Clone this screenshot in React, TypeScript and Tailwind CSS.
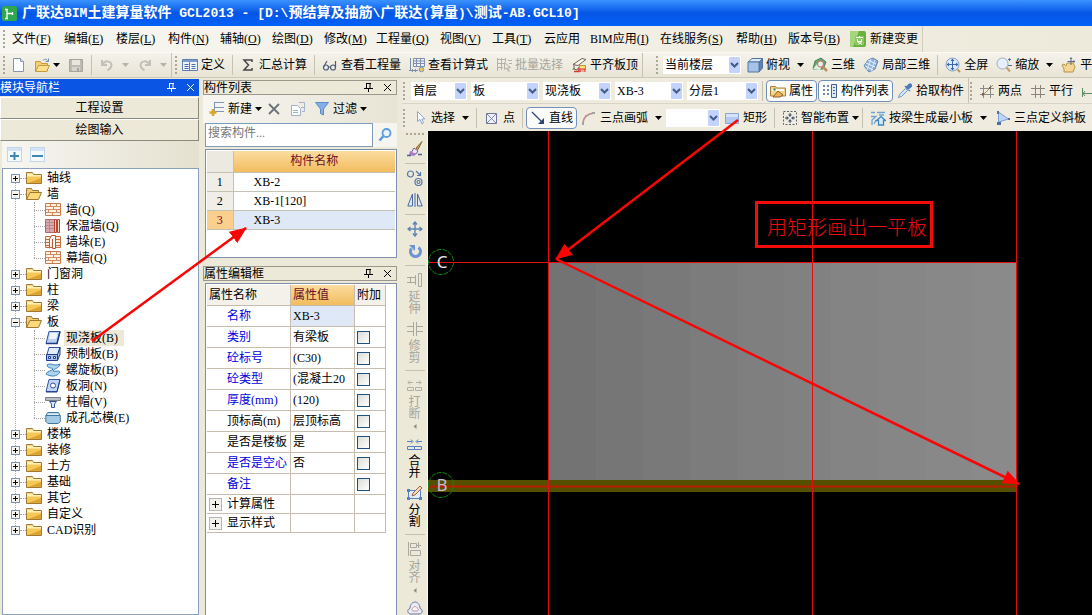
import { Fragment, useState, type ReactNode } from 'react';

const FONT = "font-['Liberation_Serif','Noto_Sans_CJK_SC',serif]";

/* ---------- Icons ---------- */

const ICONS: Record<string, ReactNode> = {
  newFile: (
    <>
      <path d="M3.5 1.5h7l3 3v10h-10z" fill="#fdfeff" stroke="#8794ab" />
      <path d="M10.5 1.5v3h3" fill="#dce5f2" stroke="#8794ab" />
    </>
  ),
  open: (
    <>
      <path d="M1.5 14V4.5h5l1 2h6V14z" fill="#f3cf78" stroke="#c69a3c" />
      <path d="M1.5 14.5l3-6h11l-3 6z" fill="#fbe08e" stroke="#c69a3c" />
      <path d="M9 3.5c2-2 4-1.5 5 .5M14.500 1.500v3h-3" fill="none" stroke="#6f8fb5" />
    </>
  ),
  save: (
    <>
      <path d="M1.500 2.500h13v12h-13z" fill="#bdbbb3" stroke="#a5a39b" />
      <path d="M4 3h8v5H4z" fill="#e8e6dd" />
      <path d="M4 10h8v4H4z" fill="#d6d4cb" />
      <path d="M9 11h2v3H9z" fill="#a5a39b" />
    </>
  ),
  undo: <path d="M3 3v5h5M3.500 7.500C6 3 12 3.500 12.500 8c0 3-2 4-4 5.500" fill="none" stroke="#c2c0b8" strokeWidth="2" />,
  redo: <path d="M13 3v5H8M12.500 7.500C10 3 4 3.500 3.500 8c0 3 2 4 4 5.500" fill="none" stroke="#c2c0b8" strokeWidth="2" />,
  define: (
    <>
      <path d="M.5 2.500h15v11H.5z" fill="#eef4fc" stroke="#5f7fae" />
      <path d="M1 3h14v2H1z" fill="#7d9ccb" />
      <path d="M2.500 7.500h4M2.500 9.500h4M2.500 11.500h4M9.500 7.500h4M9.500 9.500h4M9.500 11.500h4" stroke="#4a6ca5" />
      <path d="M7.500 5v8" stroke="#5f7fae" />
    </>
  ),
  sigma: <path d="M12 5V3H4l4.500 5L4 13h8v-2" fill="none" stroke="#444" strokeWidth="1.500" />,
  glasses: (
    <g fill="none" stroke="#4d5c78" strokeWidth="1.200">
      <circle cx="4" cy="10.500" r="2.500" />
      <circle cx="11" cy="10.500" r="2.500" />
      <path d="M6.500 10h2M1.500 10L5 4M13.500 10V4" />
    </g>
  ),
  formula: (
    <>
      <path d="M1.500 1v13M4.500 1.500h11v8h-11z" fill="#eef2f8" stroke="#7e8eaa" />
      <path d="M4 4h11M4 6.500h11M7.500 2v7M11.500 2v7" stroke="#7e8eaa" />
      <path d="M0 13.500h9M3.500 12v3M6.500 12v3" stroke="#7e8eaa" />
      <circle cx="12.500" cy="12.500" r="2.300" fill="#e6c46a" stroke="#8795b3" />
    </>
  ),
  batch: (
    <g fill="none" stroke="#b3b1a8">
      <path d="M1.500 1v13M1 2.500h9M1 6.500h7M1 10.500h6M5.500 1v12M9.500 1v4M12 3.500h4M13 6.500h3" />
      <path d="M8.500 5.500l6 5-3 .5 2 3.500M8.500 5.500v7l2-1.500 2 3.500" fill="#e9e6da" />
    </g>
  ),
  slabTop: (
    <>
      <path d="M2 7.500l9-6 4 1-8 6z" fill="#fff8ea" stroke="#6d6658" />
      <path d="M3 8v4l3 1 2-3M1.500 13l2-2" fill="none" stroke="#6d6658" />
      <path d="M3 14.500h5V11" fill="none" stroke="#d1382c" strokeWidth="1.500" />
      <path d="M8.500 8.500h6v4h-6z" fill="#ffe07a" stroke="#c98b35" />
      <path d="M9 15v-3h5v3" fill="#f4a79b" stroke="#d1382c" />
    </>
  ),
  cube: (
    <>
      <path d="M1 5l4-3.500h10.500L12 5z" fill="#dce8f9" stroke="#54749f" />
      <path d="M12 5l3.500-3.500V11L12 15z" fill="#5f82b5" stroke="#54749f" />
      <path d="M1 5h11v10H1z" fill="#a6c2e8" stroke="#54749f" />
    </>
  ),
  view3d: (
    <>
      <path d="M1 12L3 4l6-3 5 4-3 7z" fill="#67a870" stroke="#4d7d58" />
      <path d="M1 12l4-5 5 2-2 4z" fill="#dceee0" />
      <path d="M10 9l5 5" stroke="#b78f60" strokeWidth="2.500" />
      <circle cx="8.500" cy="7" r="3" fill="#e3f1fb" stroke="#d26b4b" />
    </>
  ),
  part3d: (
    <>
      <path d="M1 9l4-6 5-2 5 3-3 8-6 3z" fill="#8fb0da" stroke="#6688b5" />
      <path d="M3 6l9 4M5 3l8 4M2 9l8 4" stroke="#eef5fd" />
      <path d="M8 2L4 13M12 3L8 14" stroke="#dbe8f7" />
    </>
  ),
  fullView: (
    <>
      <circle cx="7.500" cy="7.500" r="6.500" fill="#dce9fb" stroke="#8ba0bf" />
      <path d="M7.500 3v9M3 7.500h9" stroke="#3c67a8" />
      <path d="M7.500 1.500l2 2.500h-4zM7.500 13.500l2-2.500h-4zM1.500 7.500L4 5.500v4zM13.500 7.500L11 5.500v4z" fill="#3c67a8" />
      <path d="M12.500 12.500l2.500 2.500" stroke="#b7935c" strokeWidth="2" />
    </>
  ),
  zoom: (
    <>
      <circle cx="6.500" cy="6.500" r="5.500" fill="#e6effb" stroke="#9cacc6" />
      <path d="M10.500 10.500l3.500 4" stroke="#c89e66" strokeWidth="2" />
      <path d="M13.500 1v3M12 2.500h3M12 8.500h4" stroke="#54749f" />
    </>
  ),
  pan: (
    <>
      <path d="M3 15v-3L1 8l2-1 2 2 1-3h6l2 4-2 5z" fill="#f2d894" stroke="#b7934d" />
      <path d="M10 1v7M6.500 4.500h7M9 2l1-1.500L11 2M12.500 3.500l1.500 1-1.500 1" fill="none" stroke="#5b6c8a" />
    </>
  ),
  property: (
    <>
      <path d="M.5 13V3.500h5l1 1.500h9V13z" fill="#f2d48a" stroke="#a98242" />
      <path d="M2 6h12v2H2z" fill="#fff" />
      <path d="M3 14l5-6 5 4-3 2z" fill="#e9b55b" stroke="#8e6328" />
      <circle cx="4.500" cy="6.500" r="1.300" fill="#4b9b52" />
    </>
  ),
  compList: (
    <>
      <path d="M1 3h2M1 7h2M1 11h2M5 3h2M5 7h2M5 11h2" stroke="#44628f" strokeWidth="1.500" />
      <path d="M9.500 1.500h5v13h-5z" fill="#dfeaf8" stroke="#44628f" />
      <path d="M11 4.500h2M11 7.500h2M11 10.500h2" stroke="#44628f" />
    </>
  ),
  pick: (
    <>
      <path d="M1.500 14.500l1-3 6-6 2 2-6 6z" fill="#d6e6fa" stroke="#6f97cc" />
      <path d="M8 3l5 5M9.500 4.500l2.500-3c1.500-1 3 .5 2 2l-3 2.500z" fill="#4c80c6" stroke="#4478bd" strokeWidth="1.500" />
    </>
  ),
  twoPoint: (
    <g fill="none" stroke="#8a8b86">
      <path d="M4.500 2v13M11.500 2v13M1 5.500h14M1 11.500h14" />
      <path d="M3 13L14 2" stroke="#b08a50" />
      <path d="M3 10h2v2H3zM10 4h2v2h-2z" fill="#666" stroke="none" />
    </g>
  ),
  parallel: <path d="M5.500 2v13M10.500 2v13M1 5.500h14M1 11.500h14" fill="none" stroke="#85867f" />,
  angle: <path d="M1.500 5v9M1 10.500h11M4 8l-2 2.500L4 13" fill="none" stroke="#5c8a62" />,
  cursor: <path d="M5.500 1.500v10l2.500-2 2 4.500 1.500-1L9.800 9h3z" fill="#fbfdff" stroke="#8fa5c7" />,
  point: (
    <>
      <path d="M2.500 3.500h10v10h-10z" fill="#eef0f8" stroke="#6f7796" />
      <path d="M3 4l9 9M12 4l-9 9" stroke="#8189a8" />
    </>
  ),
  line: (
    <>
      <path d="M2 2l10 10" stroke="#2c4676" strokeWidth="1.300" />
      <path d="M14 14H8l6-6z" fill="#2c4676" />
    </>
  ),
  arc: (
    <>
      <path d="M2 14C2 8 6 4 13 3" fill="none" stroke="#c08f8f" strokeWidth="1.500" />
      <path d="M1 12h2v3H1zM4 5h2v2H4zM11 2h3v2h-3z" fill="#a5a0a0" />
    </>
  ),
  rect: (
    <>
      <path d="M1.500 3.500h13v10h-13z" fill="#b3cbf2" stroke="#8aa5d6" />
      <path d="M2 4h12v3H2z" fill="#d5e3fa" />
    </>
  ),
  smart: (
    <>
      <path d="M1.500 1.500h13v13h-13z" fill="none" stroke="#5d636f" strokeDasharray="2 1.500" />
      <path d="M8 3v3M8 10v3M3 8h3M10 8h3" stroke="#45546f" />
      <path d="M8 7l2-2.500H6zM8 9l2 2.500H6zM7 8L4.500 6v4zM9 8l2.500-2v4z" fill="#45546f" />
    </>
  ),
  minSlab: (
    <g fill="none" stroke="#6da4d4" strokeWidth="1.300">
      <path d="M1 2.500h4M1 6.500h5L2 10v5M4 14l2-4M7 2.500h8M9 5h5" />
      <path d="M6.500 10.500l4.500-4 4.500 4h-2v4.500h-5v-4.500z" fill="#d7e9f8" stroke="#3f86c4" />
    </g>
  ),
  slope: (
    <>
      <path d="M3.500 2v10l10-3z" fill="#bcd5f5" stroke="#7ba1d6" />
      <path d="M2 1h2v3H2zM2 12h4v3H2zM13 8h2v2h-2z" fill="#4f6f9f" />
    </>
  ),
  folder: (
    <>
      <path d="M.5 13.500v-11h6l1 2h8v9z" fill="#f5c85a" stroke="#9c7a35" />
      <path d="M1 6.500h14V5H7.500l-1-1.500H1z" fill="#fff0b5" />
      <path d="M2 13h13V8z" fill="#e0a430" />
    </>
  ),
  folderOpen: (
    <>
      <path d="M.5 13.500v-11h5l1 2h6v3" fill="#f1cd75" stroke="#9c7a35" />
      <path d="M.5 13.500l3.500-7h11.500l-3 7z" fill="#fbd979" stroke="#9c7a35" />
    </>
  ),
  wall: (
    <>
      <path d="M.5 1.500h15v12H.5z" fill="#fff3e6" stroke="#c77b4d" />
      <path d="M1 4.500h14M1 7.500h14M1 10.500h14M5.500 2v2.500M11.500 2v2.500M8.500 5v2.500M3.500 8v2.500M11.500 8v2.500M7.500 11v2" stroke="#d08a5e" />
    </>
  ),
  wallInsulated: (
    <>
      <path d="M.5 1.500h9v13h-9z" fill="#dba9ac" stroke="#a86b72" />
      <path d="M1 4.500h8M1 7.500h8M1 10.500h8M4.500 2v12" stroke="#b8888f" />
      <path d="M9.500 1.500h2v13h-2zM12.500 1.500h2v13h-2z" fill="#f7d9c8" stroke="#b2452f" />
    </>
  ),
  wallPier: (
    <>
      <path d="M.5 2.500h15v11H.5z" fill="#fbe8d7" stroke="#c17044" />
      <path d="M1 5.500h4M1 8.500h4M11 5.500h4M11 8.500h4M11 11.500h4M1 11.500h4" stroke="#c17044" />
      <path d="M4.500 14.500V5l2-3.500h4v13h-3V5" fill="#fff" stroke="#b85b33" />
    </>
  ),
  slab: (
    <>
      <path d="M4 1.500h11l-3 12H1z" fill="#b9cff3" stroke="#31539c" />
      <path d="M5 3h8l-2 6H4z" fill="#eef4fd" />
      <path d="M1 13.500h11l3-12" fill="none" stroke="#1d3b85" strokeWidth="1.500" />
    </>
  ),
  slabPrecast: (
    <>
      <path d="M4 1.500h11l-2 7H2z" fill="#e3ecfb" stroke="#31539c" />
      <path d="M1.500 8.500h11v6h-11zM12.500 8.500l2.500-7v7l-2.500 6" fill="#a9c2ee" stroke="#1d3b85" />
      <path d="M3.500 10.500h2v2h-2zM8.500 10.500h2v2h-2z" fill="#fff" stroke="#1d3b85" />
    </>
  ),
  slabSpiral: (
    <path d="M2 3c4-3 7 2 13-1-1 5-6 4-7 7 3 1 5-1 7 1-3 5-9 5-14 2 1-3 6-3 7-5-2-2-5 0-6-4z" fill="#a9d5f1" stroke="#3a7db5" />
  ),
  slabHole: (
    <>
      <path d="M4 1.500h11l-3 12H1z" fill="#c3d5f5" stroke="#31539c" />
      <circle cx="8" cy="7.500" r="2.500" fill="#fff" stroke="#31539c" />
      <path d="M1 14h11l3-12" fill="none" stroke="#1d3b85" />
    </>
  ),
  columnCap: (
    <>
      <path d="M.5 3.500h15v3H.5z" fill="#b9bcc2" stroke="#777c85" />
      <path d="M4.500 7.500h7l-2 2.500v3.500h-3V10z" fill="#dbe7fa" stroke="#2f55a0" />
    </>
  ),
  coreMould: (
    <>
      <path d="M.8 5.500l2-3h10.500l2 3v6l-2 2H2.800l-2-2z" fill="#a4cbe6" stroke="#44779f" />
      <path d="M1 5.500h14" stroke="#44779f" />
      <path d="M3 3.500h10l1 1.500H2z" fill="#d7ebf8" />
    </>
  ),
  addItem: (
    <>
      <path d="M5.500 1v9M5.500 1.500H15M5.500 6.500H15M5.500 10.500H15" fill="none" stroke="#7e95b8" />
      <path d="M4 8v7M.5 11.500h7" stroke="#d7a62d" strokeWidth="2.500" />
    </>
  ),
  remove: <path d="M3 3l10 10M13 3L3 13" stroke="#6b7279" strokeWidth="1.800" />,
  copyDoc: (
    <>
      <path d="M1.500 4.500h6l3 3v7h-9z" fill="#fbfcfe" stroke="#a4b2ca" />
      <path d="M3 9.500h5M3 11.500h5" stroke="#a4b2ca" />
      <path d="M9 1.500h5.500v9H12M14 6.500h-3" fill="none" stroke="#a4b2ca" />
    </>
  ),
  filter: <path d="M1.500 1.500h13L9.500 8v6l-3-1.500V8z" fill="#86aee6" stroke="#5f8bc9" />,
  search: (
    <>
      <circle cx="9.500" cy="6" r="4" fill="#eaf4fe" stroke="#5d9dda" strokeWidth="1.800" />
      <path d="M6.500 9L2.500 13.500" stroke="#5d9dda" strokeWidth="2.500" />
    </>
  ),
  brush: (
    <>
      <path d="M15 .5L9 7l2 1.500z" fill="#c99b5b" stroke="#8f6937" />
      <path d="M7 7l4 3-2 3-5-1z" fill="#efe4f4" stroke="#71618d" />
      <path d="M3 10l6 3-2 2-5-1z" fill="#a97cc4" />
      <path d="M0 14.500h4M11 13.500h4" stroke="#45648f" strokeWidth="1.500" />
    </>
  ),
  copy: (
    <g fill="none" stroke="#5a76ab" strokeWidth="1.200">
      <circle cx="3.500" cy="4" r="3" />
      <circle cx="11.500" cy="12" r="3.500" />
      <circle cx="11.500" cy="12" r="1.500" />
      <path d="M9 1l4 4M13.500 2v3.500H10" />
    </g>
  ),
  mirror: (
    <>
      <path d="M5.500 2v12H.8zM10.500 2v12h4.700z" fill="#dde9fa" stroke="#49699f" />
      <path d="M8 1v14" stroke="#49699f" />
    </>
  ),
  move: (
    <path d="M8 1v14M1 8h14M6 3.500L8 1l2 2.500M6 12.500L8 15l2-2.500M3.500 6L1 8l2.500 2M12.500 6L15 8l-2.500 2" fill="none" stroke="#5c85b5" strokeWidth="1.400" />
  ),
  rotate: (
    <>
      <path d="M11.500 4.500a5 5 0 1 1-7 1" fill="none" stroke="#6d92d6" strokeWidth="3" />
      <path d="M2 2h6v6z" fill="#6d92d6" />
    </>
  ),
  extend: <path d="M0 5.500h8M0 10.500h8M8.500 3v10M3.500 5v5M11.500 1.500h3v13h-3z" fill="none" stroke="#aaa89e" />,
  trim: <path d="M0 5.500h6M10 5.500h6M0 10.500h6M10 10.500h6M6.500 1v14M9.500 1v14" fill="none" stroke="#aaa89e" />,
  split2: <path d="M.5 10.500h6v3h-6zM8.500 10.500h6v3h-6zM1 5.500h5M9 5.500h5M3 3.500l-2 2 2 2M12 3.500l2 2-2 2" fill="none" stroke="#b2b0a6" />,
  merge: <path d="M.5 10.500h7v3h-7zM7.500 10.500h7v3h-7zM0 5.500h5M10 5.500h5M4 3.500l2 2-2 2M11 3.500l-2 2 2 2" fill="none" stroke="#5581c4" />,
  divide: (
    <>
      <path d="M1.500 5.500h12v8h-12z" fill="#e3edfb" stroke="#5581c4" />
      <path d="M0 4h3v3H0zM0 12h3v3H0zM12 12h3v3h-3z" fill="#5581c4" />
      <path d="M5 11l1-3 7-7 2 2-7 7z" fill="#f0d9b6" stroke="#a0674c" />
    </>
  ),
  align: <path d="M1.500 1v14M3.500 2.500h6v4h-6zM3.500 9.500h10v5h-10zM11.500 1v6M10 4.500h4" fill="none" stroke="#aaa89e" />,
  cloud: (
    <>
      <path d="M4 14c-4 0-4-5-1-5.500C3 4 6 2 8 2s5 2 5 6.500c3 .5 3 5.500-1 5.500z" fill="#e9ecf6" stroke="#68779f" />
      <path d="M5.500 11c-1.500-1 0-2.500 0-2.500C6 6 10 6 10.500 8.500c0 0 1.500 1.500 0 2.500z" fill="#fff" stroke="#d18b96" />
    </>
  ),
};

function Icon({ name }: { name: string }) {
  return (
    <svg className="w-4 h-4 shrink-0" viewBox="0 0 16 16" aria-hidden="true">
      {ICONS[name]}
    </svg>
  );
}

function Caret({ muted }: { muted?: boolean }) {
  return (
    <svg className="w-[7px] h-1 shrink-0" viewBox="0 0 7 4" aria-hidden="true">
      <path d="M0 0h7L3.500 4z" fill={muted ? '#b5b3aa' : '#000'} />
    </svg>
  );
}

/* ---------- Toolbar parts ---------- */

interface ToolProps {
  icon: string;
  label?: string;
  title?: string;
  arrow?: boolean;
  tight?: boolean;
  active?: boolean;
  disabled?: boolean;
}

function Tool({ icon, label, title, arrow, tight, active, disabled }: ToolProps) {
  const frame = active ? 'border border-[#7390b8] rounded-sm bg-[#fbfbfa] px-[3px]' : tight ? 'pl-1' : 'px-1';
  return (
    <button
      type="button"
      aria-label={label ?? title}
      disabled={disabled}
      className={`flex items-center gap-[3px] h-[22px] shrink-0 whitespace-nowrap ${frame} ${disabled ? 'text-[#a8a69b]' : ''}`}
    >
      <Icon name={icon} />
      {label}
      {arrow && (
        <span className={tight ? '' : 'pl-1'}>
          <Caret muted={disabled} />
        </span>
      )}
    </button>
  );
}

function Separator() {
  return <span className="w-px h-5 mx-[3px] shrink-0 bg-[#c5c2b2]" />;
}

function Grip() {
  return <span className="h-[18px] mx-px shrink-0 border-l-2 border-dotted border-[#a9a799]" />;
}

function Picker({ label, value, className }: { label: string; value: string; className: string }) {
  return (
    <div className={`relative h-[18px] shrink-0 bg-white ${className}`}>
      <select aria-label={label} className="appearance-none w-full h-full pl-0.5 pr-3 leading-4 outline-none bg-transparent">
        <option>{value}</option>
      </select>
      <svg className="absolute right-px top-px w-[11px] h-4 pointer-events-none" viewBox="0 0 11 16" aria-hidden="true">
        <rect width="11" height="16" rx="1" fill="#c3d3fb" />
        <path d="M2 6l3.500 3.500L9 6" fill="none" stroke="#3f5c8c" strokeWidth="2" />
      </svg>
    </div>
  );
}

function Mono({ children }: { children: ReactNode }) {
  return <span className="text-[13px] font-['Liberation_Mono',monospace] whitespace-pre">{children}</span>;
}

/* ---------- Menu ---------- */

const MENUS = [
  { text: '文件', key: 'F', width: 'w-[52px]' },
  { text: '编辑', key: 'E', width: 'w-[52px]' },
  { text: '楼层', key: 'L', width: 'w-[52px]' },
  { text: '构件', key: 'N', width: 'w-[52px]' },
  { text: '辅轴', key: 'O', width: 'w-[52px]' },
  { text: '绘图', key: 'D', width: 'w-[52px]' },
  { text: '修改', key: 'M', width: 'w-[52px]' },
  { text: '工程量', key: 'Q', width: 'w-16' },
  { text: '视图', key: 'V', width: 'w-[52px]' },
  { text: '工具', key: 'T', width: 'w-[52px]' },
  { text: '云应用', key: '', width: 'w-[46px]' },
  { text: 'BIM应用', key: 'I', width: 'w-[70px]' },
  { text: '在线服务', key: 'S', width: 'w-[76px]' },
  { text: '帮助', key: 'H', width: 'w-[52px]' },
  { text: '版本号', key: 'B', width: 'w-[62px]' },
];

function MenuBar() {
  return (
    <nav className="flex items-center h-[26px] pl-0.5 bg-gradient-to-r from-[#f7f6f1] to-[#edeadb]">
      <Grip />
      <div className="flex items-center h-full pl-1.5 border-r border-[#cfccbd]">
        {MENUS.map((m) => (
          <button key={m.text} type="button" className={`text-left whitespace-nowrap shrink-0 ${m.width}`}>
            {m.text}
            {m.key && (
              <>
                (<u>{m.key}</u>)
              </>
            )}
          </button>
        ))}
        <button type="button" className="flex items-center gap-1 pr-1 whitespace-nowrap">
          <svg className="w-4 h-4" viewBox="0 0 16 16" aria-hidden="true">
            <rect width="16" height="16" rx="2" fill="#69b03c" />
            <path d="M0 0h9L3 16H0z" fill="#a6d67c" />
            <rect x="5" y="5" width="9" height="9" fill="#8cc765" />
            <path d="M6 6.500h7M9.500 5v2M7.500 8v2M11.500 8v2M7 10.500h5l-4 3M8 11l4 2.500" fill="none" stroke="#f4fbe9" />
          </svg>
          新建变更
        </button>
      </div>
    </nav>
  );
}

function MainToolbar() {
  return (
    <div className="flex items-center h-[26px] pl-0.5 border-y border-t-[#fbfaf5] border-b-[#cbc8b8] bg-gradient-to-b from-[#f4f2ea] to-[#e8e5d6]">
      <Grip />
      <div className="flex items-center">
        <Tool icon="newFile" title="新建" />
        <div className="flex pr-1">
          <Tool icon="open" title="打开" arrow tight />
        </div>
        <Tool icon="save" title="保存" disabled />
        <Separator />
        <Tool icon="undo" title="撤销" arrow disabled />
        <Tool icon="redo" title="恢复" arrow disabled />
      </div>
      <span className="w-px h-full mr-0.5 shrink-0 bg-[#c5c2b2]" />
      <Grip />
      <Tool icon="define" label="定义" />
      <Separator />
      <Tool icon="sigma" label="汇总计算" />
      <Separator />
      <Tool icon="glasses" label="查看工程量" />
      <Tool icon="formula" label="查看计算式" />
      <Tool icon="batch" label="批量选择" disabled />
      <Tool icon="slabTop" label="平齐板顶" />
      <span className="w-px h-full mr-3 shrink-0 bg-[#c5c2b2]" />
      <Grip />
      <Picker label="楼层范围" value="当前楼层" className="w-[78px] ml-1 mr-0.5" />
      <Tool icon="cube" label="俯视" arrow />
      <Tool icon="view3d" label="三维" />
      <Tool icon="part3d" label="局部三维" />
      <Separator />
      <Tool icon="fullView" label="全屏" />
      <Tool icon="zoom" label="缩放" arrow />
      <Tool icon="pan" label="平移" />
    </div>
  );
}

/* ---------- Dock panels ---------- */

function PanelButtons({ light }: { light?: boolean }) {
  const stroke = light ? '#fff' : '#000';
  return (
    <span className="flex gap-2.5 ml-auto pr-1">
      <button type="button" aria-label="固定">
        <svg className="w-[9px] h-[9px]" viewBox="0 0 9 9" aria-hidden="true">
          <path d="M2.500 0v5M2 .5h5M6 0v5M0 5.500h9M4.500 5v4" fill="none" stroke={stroke} />
        </svg>
      </button>
      <button type="button" aria-label="关闭">
        <svg className="w-[9px] h-[9px]" viewBox="0 0 9 9" aria-hidden="true">
          <path d="M1 1l7 7M8 1L1 8" stroke={stroke} />
        </svg>
      </button>
    </span>
  );
}

interface TreeNode {
  name: string;
  children?: { name: string; icon: string; selected?: boolean }[];
}

const TREE: TreeNode[] = [
  { name: '轴线' },
  {
    name: '墙',
    children: [
      { name: '墙(Q)', icon: 'wall' },
      { name: '保温墙(Q)', icon: 'wallInsulated' },
      { name: '墙垛(E)', icon: 'wallPier' },
      { name: '幕墙(Q)', icon: 'wall' },
    ],
  },
  { name: '门窗洞' },
  { name: '柱' },
  { name: '梁' },
  {
    name: '板',
    children: [
      { name: '现浇板(B)', icon: 'slab', selected: true },
      { name: '预制板(B)', icon: 'slabPrecast' },
      { name: '螺旋板(B)', icon: 'slabSpiral' },
      { name: '板洞(N)', icon: 'slabHole' },
      { name: '柱帽(V)', icon: 'columnCap' },
      { name: '成孔芯模(E)', icon: 'coreMould' },
    ],
  },
  { name: '楼梯' },
  { name: '装修' },
  { name: '土方' },
  { name: '基础' },
  { name: '其它' },
  { name: '自定义' },
  { name: 'CAD识别' },
];

function ExpandBox({ open, label, onClick }: { open?: boolean; label: string; onClick?: () => void }) {
  return (
    <button type="button" aria-label={label} onClick={onClick} className="shrink-0">
      <svg className="w-[9px] h-[9px]" viewBox="0 0 9 9" aria-hidden="true">
        <rect x=".5" y=".5" width="8" height="8" fill="#f6f4ee" stroke="#7c93ae" />
        <path d={open ? 'M2 4.500h5' : 'M2 4.500h5M4.500 2v5'} stroke="#000" />
      </svg>
    </button>
  );
}

function ModuleTree() {
  const [closed, setClosed] = useState<string[]>([]);

  const toggle = (name: string) =>
    setClosed((prev) => (prev.includes(name) ? prev.filter((n) => n !== name) : [...prev, name]));

  return (
    <div className="flex-1 ml-0.5 pt-px overflow-hidden bg-white border border-[#8ba0bd]">
      <ul className="relative">
        <li className="absolute left-3 top-2 bottom-2 border-l border-dotted border-[#a5a5a5]" />
        {TREE.map((node) => {
          const open = !!node.children && !closed.includes(node.name);
          return (
            <li key={node.name} className="relative">
              <div className="flex items-center h-4 pl-2">
                <ExpandBox open={open} label={node.name} onClick={() => toggle(node.name)} />
                <span className="w-1.5 border-t border-dotted border-[#a5a5a5]" />
                <Icon name={open ? 'folderOpen' : 'folder'} />
                <span className="pl-[5px]">{node.name}</span>
              </div>
              {open && (
                <ul className="ml-[31px] relative">
                  <li className="absolute left-0 top-0 bottom-2 border-l border-dotted border-[#a5a5a5]" />
                  {node.children!.map((child) => (
                    <li key={child.name} className="flex items-center h-4">
                      <span className="w-[11px] border-t border-dotted border-[#a5a5a5]" />
                      <Icon name={child.icon} />
                      <span className={`ml-[3px] pl-0.5 pr-1.5 leading-4 ${child.selected ? 'bg-[#ece9d8]' : ''}`}>
                        {child.name}
                      </span>
                    </li>
                  ))}
                </ul>
              )}
            </li>
          );
        })}
      </ul>
    </div>
  );
}

function ModulePanel() {
  return (
    <aside className="flex flex-col w-[199px] shrink-0 pt-px">
      <div className="flex items-center h-[17px] bg-[#0a55e4] text-white">
        模块导航栏
        <PanelButtons light />
      </div>
      <div className="flex flex-col pt-px">
        {['工程设置', '绘图输入'].map((name) => (
          <button
            key={name}
            type="button"
            className="h-[22px] border border-t-white border-l-white border-r-[#8c8a7d] border-b-[#8c8a7d] bg-[#ece9d8]"
          >
            {name}
          </button>
        ))}
      </div>
      <div className="flex items-center gap-2 h-[27px] pl-[5px] ml-0.5 bg-gradient-to-r from-[#f7f6f1] to-[#e4e1d0]">
        {['展开', '折叠'].map((name) => (
          <button key={name} type="button" aria-label={name}>
            <svg className="w-[15px] h-[15px]" viewBox="0 0 15 15" aria-hidden="true">
              <rect x=".5" y=".5" width="14" height="14" fill="#f4f9fe" stroke="#c3d5ea" />
              <path d="M1 1h13v3H1z" fill="#d3e3f5" />
              <path d={name === '展开' ? 'M3 9h9M7.500 5v8' : 'M2 9h11'} stroke="#3a87b8" strokeWidth="2" />
            </svg>
          </button>
        ))}
      </div>
      <ModuleTree />
    </aside>
  );
}

const COMPONENTS = ['XB-2', 'XB-1[120]', 'XB-3'];

function ComponentPanel() {
  return (
    <section className="flex flex-col">
      <div className="flex items-center h-[15px] border border-[#9b998c]">
        构件列表
        <PanelButtons />
      </div>
      <div className="flex items-center h-7 bg-gradient-to-r from-[#f7f6f1] to-[#e7e4d5]">
        <div className="flex items-center pl-0.5">
          <Tool icon="addItem" label="新建" arrow tight />
          <Tool icon="remove" title="删除" />
          <Tool icon="copyDoc" title="复制" />
          <Tool icon="filter" label="过滤" arrow tight />
        </div>
      </div>
      <div className="flex h-6 ml-0.5">
        <input
          aria-label="搜索构件"
          placeholder="搜索构件..."
          className="w-[168px] h-6 px-0.5 pb-1 bg-white border border-[#7f9db9] outline-none placeholder:text-[#777]"
        />
        <button type="button" aria-label="搜索" className="flex flex-1 items-center justify-center bg-[#f6f5ef]">
          <Icon name="search" />
        </button>
      </div>
      <div className="h-[109px] mt-0.5 ml-0.5 p-px bg-white border border-[#7f8fa9]">
        <table className="w-full table-fixed border-collapse">
          <thead>
            <tr className="h-[21px]">
              <th className="w-[26px] bg-[#ece9e0] border-r border-b border-[#c5c1b5]" />
              <th className="font-normal text-[#6b0d23] bg-gradient-to-b from-[#fbdc9f] to-[#f1bc5c] border-b border-[#c5c1b5]">
                构件名称
              </th>
            </tr>
          </thead>
          <tbody>
            {COMPONENTS.map((name, index) => {
              const selected = index === 2;
              return (
                <tr key={name} className={`h-[19px] leading-4 ${selected ? 'bg-[#dfe8f6]' : ''}`}>
                  <td className={`text-center border-r border-b border-[#c5c1b5] ${selected ? 'bg-[#fbcf8c] text-[#6b0d23]' : 'bg-[#f0eee6]'}`}>
                    {index + 1}
                  </td>
                  <td className="pl-5 border-b border-[#c5c1b5]">{name}</td>
                </tr>
              );
            })}
          </tbody>
        </table>
      </div>
    </section>
  );
}

interface Property {
  name: string;
  value: string;
  blue?: boolean;
  check?: boolean;
}

const PROPERTIES: Property[] = [
  { name: '名称', value: 'XB-3', blue: true },
  { name: '类别', value: '有梁板', blue: true, check: true },
  { name: '砼标号', value: '(C30)', blue: true, check: true },
  { name: '砼类型', value: '(混凝土20', blue: true, check: true },
  { name: '厚度(mm)', value: '(120)', blue: true, check: true },
  { name: '顶标高(m)', value: '层顶标高', check: true },
  { name: '是否是楼板', value: '是', check: true },
  { name: '是否是空心', value: '否', blue: true, check: true },
  { name: '备注', value: '', blue: true, check: true },
];

function PropertyPanel() {
  const cell = 'border-r border-b border-[#c5bcae] overflow-hidden whitespace-nowrap';
  return (
    <section className="flex flex-col flex-1 mt-2">
      <div className="flex items-center h-[15px] border border-[#9b998c]">
        属性编辑框
        <PanelButtons />
      </div>
      <div className="flex-1 mt-0.5 ml-0.5 pl-px pt-px bg-white border border-b-0 border-[#7f8fa9]">
        <table className="w-[179px] table-fixed border-separate border-spacing-0">
          <thead>
            <tr className="h-[21px] text-left">
              <th className={`w-[84px] pl-0.5 font-normal bg-[#f3f1e9] ${cell}`}>属性名称</th>
              <th className={`w-16 pl-0.5 font-normal text-[#6b0d23] bg-gradient-to-b from-[#fbdc9f] to-[#f1bc5c] ${cell}`}>
                属性值
              </th>
              <th className={`pl-0.5 font-normal bg-[#f3f1e9] ${cell}`}>附加</th>
            </tr>
          </thead>
          <tbody>
            {PROPERTIES.map((p, index) => (
              <tr key={p.name} className="h-[21px] leading-4">
                <td className={`pl-5 ${cell} ${p.blue ? 'text-[#0000e0]' : ''}`}>{p.name}</td>
                <td className={`pl-0.5 ${cell} ${index === 0 ? 'bg-[#dfe8f6]' : ''}`}>{p.value}</td>
                <td className={`pl-0.5 ${cell}`}>
                  {p.check && (
                    <input
                      type="checkbox"
                      aria-label={`附加 ${p.name}`}
                      className="block appearance-none w-[13px] h-[13px] border border-[#1c5180] bg-gradient-to-br from-[#dcdcd6] to-white"
                    />
                  )}
                </td>
              </tr>
            ))}
            {['计算属性', '显示样式'].map((name) => (
              <tr key={name} className="h-[19px] leading-4">
                <td className={cell}>
                  <span className="flex items-center">
                    <button type="button" aria-label={`展开 ${name}`} className="w-5 pl-0.5">
                      <svg className="w-[13px] h-[13px]" viewBox="0 0 13 13" aria-hidden="true">
                        <rect x=".5" y=".5" width="12" height="12" fill="#f2f1ec" stroke="#b9b7ae" />
                        <path d="M3 6.500h7M6.500 3v7" stroke="#000" />
                      </svg>
                    </button>
                    {name}
                  </span>
                </td>
                <td className={cell} />
                <td className={cell} />
              </tr>
            ))}
          </tbody>
        </table>
      </div>
    </section>
  );
}

/* ---------- Drawing area ---------- */

function DrawToolbars() {
  return (
    <div className="bg-[#efecdf]">
      <div className="flex items-center h-[26px] border-b border-[#d8d5c6]">
        <Grip />
        <div className="flex gap-1 pl-[5px] pr-px">
          <Picker label="楼层" value="首层" className="w-14" />
          <Picker label="构件类型" value="板" className="w-[68px]" />
          <Picker label="构件种类" value="现浇板" className="w-[68px]" />
          <Picker label="构件" value="XB-3" className="w-[68px]" />
          <Picker label="分层" value="分层1" className="w-[71px]" />
        </div>
        <Separator />
        <div className="flex gap-px">
          <Tool icon="property" label="属性" active />
          <Tool icon="compList" label="构件列表" active />
        </div>
        <Tool icon="pick" label="拾取构件" />
        <span className="w-px h-full shrink-0 bg-[#c5c2b2]" />
        <Grip />
        <div className="flex pl-0.5">
          <Tool icon="twoPoint" label="两点" />
          <Tool icon="parallel" label="平行" />
          <Tool icon="angle" title="点角" />
        </div>
      </div>
      <div className="flex items-center h-[27px]">
        <Grip />
        <div className="flex items-center pl-0.5">
          <Tool icon="cursor" label="选择" arrow />
          <Separator />
          <Tool icon="point" label="点" />
        </div>
        <Separator />
        <Tool icon="line" label="直线" active />
        <Tool icon="arc" label="三点画弧" arrow />
        <Picker label="画法" value="" className="w-[54px]" />
        <Tool icon="rect" label="矩形" />
        <Separator />
        <Tool icon="smart" label="智能布置" arrow tight />
        <Separator />
        <Tool icon="minSlab" label="按梁生成最小板" arrow />
        <Tool icon="slope" label="三点定义斜板" />
      </div>
    </div>
  );
}

interface EditTool {
  icon: string;
  title: string;
  text?: boolean;
  muted?: boolean;
  arrow?: boolean;
}

const EDIT_GROUPS: EditTool[][] = [
  [{ icon: 'brush', title: '格式刷' }],
  [
    { icon: 'copy', title: '复制' },
    { icon: 'mirror', title: '镜像' },
  ],
  [
    { icon: 'move', title: '移动' },
    { icon: 'rotate', title: '旋转' },
  ],
  [
    { icon: 'extend', title: '延伸', text: true, muted: true },
    { icon: 'trim', title: '修剪', text: true, muted: true },
  ],
  [
    { icon: 'split2', title: '打断', text: true, muted: true, arrow: true },
    { icon: 'merge', title: '合并', text: true },
    { icon: 'divide', title: '分割', text: true },
  ],
  [
    { icon: 'align', title: '对齐', text: true, muted: true, arrow: true },
    { icon: 'cloud', title: '偏移' },
  ],
];

function EditToolbar() {
  return (
    <div className="flex flex-col items-center w-[26px] shrink-0 pt-0.5 overflow-hidden bg-[#ece9d8] border-r border-[#f8f7f0]">
      <span className="w-[18px] border-t-2 border-dotted border-[#a9a799]" />
      {EDIT_GROUPS.map((group, index) => (
        <Fragment key={index}>
          {index > 0 && <span className="w-5 h-px shrink-0 bg-[#c5c2b2]" />}
          <div className="flex flex-col items-center gap-1.5 py-1.5">
            {group.map((tool) => (
              <button
                key={tool.icon}
                type="button"
                aria-label={tool.title}
                className={`flex flex-col items-center gap-[3px] ${tool.muted ? 'text-[#a8a69b]' : ''}`}
              >
                <Icon name={tool.icon} />
                {tool.text && <span className="w-3 leading-3 break-all">{tool.title}</span>}
                {tool.arrow && (
                  <svg className="w-1 h-[7px]" viewBox="0 0 4 7" aria-hidden="true">
                    <path d="M3.500 1v5L.5 3.500z" fill="#8e8c82" />
                  </svg>
                )}
              </button>
            ))}
          </div>
        </Fragment>
      ))}
    </div>
  );
}

const SHADES = ['#737373', '#767676', '#797979', '#7c7c7c', '#7f7f7f', '#818181', '#848484', '#868686', '#888888', '#8a8a8a'];

function AxisMark({ y, name, color }: { y: number; name: string; color: string }) {
  return (
    <g>
      <circle cx="13" cy={y} r="12.500" fill="none" stroke="#0c8a14" strokeDasharray="5 1" />
      <text x="14" y={y + 6} textAnchor="middle" fontSize="17" fill={color} className="font-['Noto_Sans',sans-serif]">
        {name}
      </text>
    </g>
  );
}

function Canvas() {
  return (
    <div className="relative flex-1 min-w-0 overflow-hidden bg-black">
      <svg className="absolute inset-0 w-full h-full" aria-label="绘图区">
        {SHADES.map((shade, index) => (
          <rect key={shade} x={121 + index * 47} y="132" width={index === 9 ? 45 : 47} height="217" fill={shade} />
        ))}
        <rect y="349" width="588" height="12" fill="#555000" />
        <path d="M0 355.500h588" stroke="#b81c00" strokeWidth="2" />
        <path d="M0 131.500h588M120.500 0v600M384.500 0v600M588.500 0v600" stroke="#e60c14" />
        <AxisMark y={131} name="C" color="#e9e9ee" />
        <AxisMark y={354} name="B" color="#c9bccf" />
      </svg>
      <div className="absolute left-[327px] top-[70px] flex items-center justify-center w-[178px] h-[47px] pl-1.5 pt-1.5 border-[3px] border-[#f20d0d] text-xl font-light text-[#e80c10] whitespace-nowrap">
        用矩形画出一平板
      </div>
    </div>
  );
}

/* Red guide arrows laid over the whole window */
function GuideArrows() {
  return (
    <svg className="absolute inset-0 w-full h-full pointer-events-none" aria-hidden="true">
      <defs>
        <marker id="head" markerUnits="userSpaceOnUse" markerWidth="18" markerHeight="14" refX="16" refY="7" orient="auto">
          <path d="M0 0l17 7-17 7z" fill="#fa0505" />
        </marker>
      </defs>
      <g stroke="#fa0505" strokeWidth="2.500" fill="none">
        <path d="M92 341L246 228" markerEnd="url(#head)" />
        <path d="M738 120L556 259" markerEnd="url(#head)" />
        <path d="M556 259L1019 484" markerEnd="url(#head)" />
      </g>
    </svg>
  );
}

export default function App() {
  return (
    <div className={`relative flex flex-col w-full h-screen overflow-hidden text-xs leading-4 text-black bg-[#ece9d8] ${FONT}`}>
      <header className="flex items-center gap-[5px] h-[26px] shrink-0 pl-0.5 bg-gradient-to-b from-[#3a93ff] via-[#0655e5] to-[#0162f8] text-white">
        <svg className="w-[15px] h-[15px]" viewBox="0 0 15 15" aria-hidden="true">
          <rect width="15" height="15" rx="2" fill="#2fa84d" />
          <path d="M5 3v9M5 7.500h5M3 3.500h3M3 12.500h3M10.500 6v3" fill="none" stroke="#fff" strokeWidth="1.300" />
        </svg>
        <h1 className="text-sm font-bold whitespace-nowrap">
          广联达<Mono>BIM</Mono>土建算量软件<Mono> GCL2013 - [D:\</Mono>预结算及抽筋<Mono>\</Mono>广联达<Mono>(</Mono>算量<Mono>)\</Mono>测试<Mono>-AB.GCL10]</Mono>
        </h1>
      </header>
      <MenuBar />
      <MainToolbar />
      <div className="flex flex-1 min-h-0">
        <ModulePanel />
        <div className="flex flex-col w-[194px] shrink-0 ml-1 mr-[5px] pt-0.5">
          <ComponentPanel />
          <PropertyPanel />
        </div>
        <main className="flex flex-col flex-1 min-w-0 overflow-hidden">
          <DrawToolbars />
          <div className="flex flex-1 min-h-0">
            <EditToolbar />
            <Canvas />
          </div>
        </main>
      </div>
      <GuideArrows />
    </div>
  );
}
